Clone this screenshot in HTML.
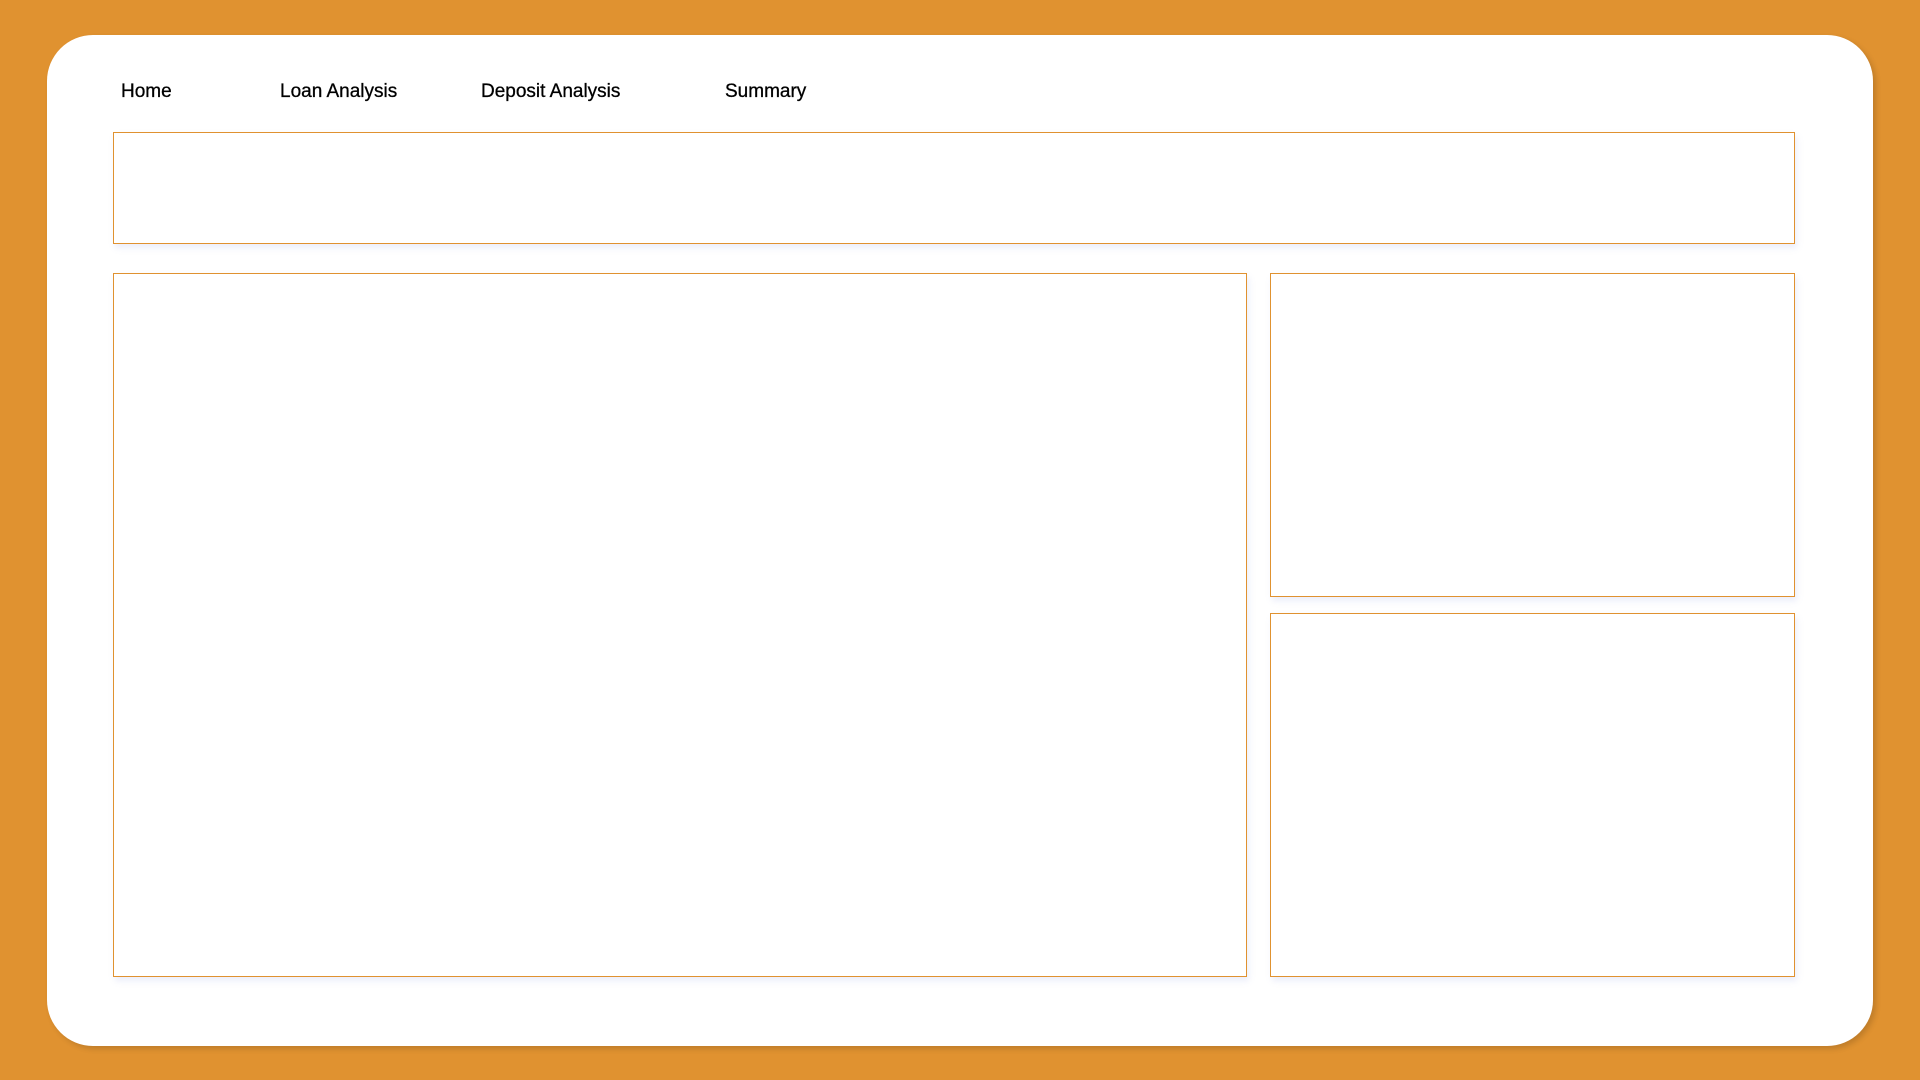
<!DOCTYPE html>
<html><head><meta charset="utf-8"><style>
html,body{margin:0;padding:0;}
body{width:1920px;height:1080px;background:#E09230;position:relative;overflow:hidden;font-family:"Liberation Sans",sans-serif;}
.card{position:absolute;left:47px;top:35px;width:1826px;height:1011px;background:#fff;border-radius:46px;box-shadow:3px 3px 6px rgba(0,0,0,0.15);}
.nav{position:absolute;top:81px;font-size:19px;color:#000;-webkit-text-stroke:0.3px #000;}
.box{position:absolute;border:1.5px solid #E09230;box-sizing:border-box;background:#fff;box-shadow:2px 4px 6px rgba(150,160,230,0.18);}
</style></head><body>
<div class="card"></div>
<div class="nav" style="left:121px">Home</div>
<div class="nav" style="left:280px">Loan Analysis</div>
<div class="nav" style="left:481px">Deposit Analysis</div>
<div class="nav" style="left:725px">Summary</div>
<div class="box" style="left:113px;top:132px;width:1682px;height:112px"></div>
<div class="box" style="left:113px;top:273px;width:1134px;height:704px"></div>
<div class="box" style="left:1270px;top:273px;width:525px;height:324px"></div>
<div class="box" style="left:1270px;top:613px;width:525px;height:364px"></div>
</body></html>
